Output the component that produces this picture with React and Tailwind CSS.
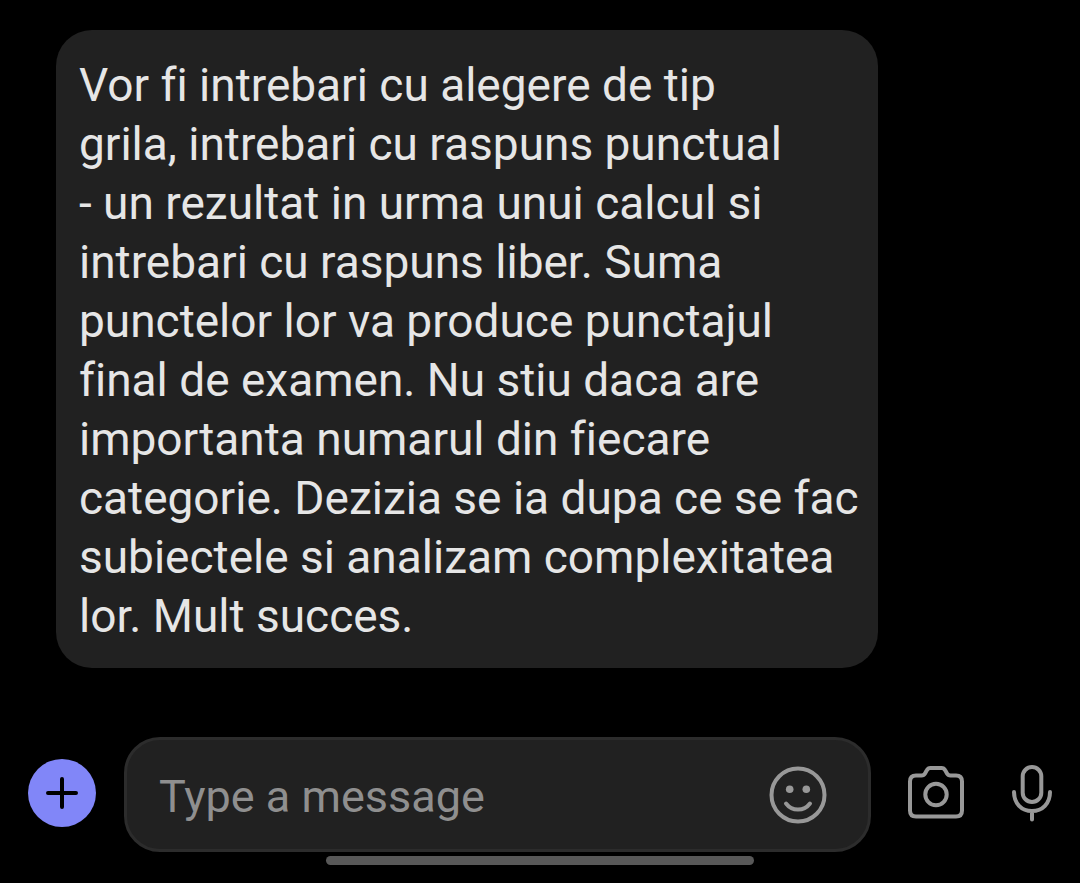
const message = `Vor fi intrebari cu alegere de tip
grila, intrebari cu raspuns punctual
- un rezultat in urma unui calcul si
intrebari cu raspuns liber. Suma
punctelor lor va produce punctajul
final de examen. Nu stiu daca are
importanta numarul din fiecare
categorie. Dezizia se ia dupa ce se fac
subiectele si analizam complexitatea
lor. Mult succes.`;

function Icon({ children }) {
  return (
    <svg
      viewBox="0 0 60 60"
      className="block size-15"
      fill="none"
      stroke="currentColor"
      strokeWidth="4"
      strokeLinecap="round"
      strokeLinejoin="round"
      aria-hidden="true"
    >
      {children}
    </svg>
  );
}

function Composer() {
  return (
    <form className="flex items-center pl-7 pr-[18px]" onSubmit={(e) => e.preventDefault()}>
      <button
        type="button"
        aria-label="Add attachment"
        className="mr-7 mb-1 flex size-17 shrink-0 items-center justify-center rounded-full bg-[#8186f8] text-black"
      >
        <svg viewBox="0 0 32 32" className="size-8" stroke="currentColor" strokeWidth="4" strokeLinecap="round" aria-hidden="true">
          <path d="M16 2v28M2 16h28" />
        </svg>
      </button>
      <div className="flex h-[115px] min-w-0 flex-1 items-center rounded-[36px] border-3 border-[#2c2c2c] bg-[#212121] pl-8 pr-10">
        <input
          type="text"
          aria-label="Message"
          placeholder="Type a message"
          className="min-w-0 flex-1 bg-transparent pt-1 text-[45px] leading-[60px] text-[#e6e6e6] outline-none placeholder:text-[#8f8f8f]"
        />
        <button type="button" aria-label="Emoji" className="shrink-0 text-[#989898]">
          <Icon>
            <circle cx="30" cy="30" r="26.5" />
            <circle cx="21.7" cy="24.3" r="3.8" fill="currentColor" stroke="none" />
            <circle cx="38.3" cy="24.3" r="3.8" fill="currentColor" stroke="none" />
            <path d="M18 38.5C24 46.5 36 46.5 42 38.5" />
          </Icon>
        </button>
      </div>
      <button type="button" aria-label="Camera" className="mb-1 ml-[35px] shrink-0 text-[#989898]">
        <Icon>
          <path d="M10 12.5h5.5q2.4 0 3.5-2l1.8-3.2q1.2-2.3 3.7-2.3h11q2.5 0 3.7 2.3l1.8 3.2q1.1 2 3.5 2H50q6 0 6 6V47.5q0 6-6 6H10q-6 0-6-6V18.5q0-6 6-6Z" />
          <circle cx="30" cy="31.5" r="10.7" />
        </Icon>
      </button>
      <button type="button" aria-label="Record voice message" className="mb-1 ml-9 shrink-0 text-[#989898]">
        <Icon>
          <rect x="20.7" y="4" width="18.6" height="35" rx="9.3" />
          <path d="M12 29C12 40.5 19.5 48 30 48S48 40.5 48 29M30 48v8.5" />
        </Icon>
      </button>
    </form>
  );
}

export default function App() {
  return (
    <div className="flex min-h-screen flex-col bg-black font-['Roboto',sans-serif]">
      <main className="flex-1 pl-14 pr-[202px] pt-[30px]">
        <p className="rounded-[36px] bg-[#212121] px-[23px] pb-[22px] pt-[26px] text-[46px] leading-[59px] whitespace-pre text-[#e6e6e6] [font-variant-ligatures:none]">
          {message}
        </p>
      </main>
      <footer>
        <Composer />
        <div className="mx-auto mb-[18px] mt-1 h-[9px] w-[428px] max-w-full rounded-full bg-[#585858]" />
      </footer>
    </div>
  );
}
